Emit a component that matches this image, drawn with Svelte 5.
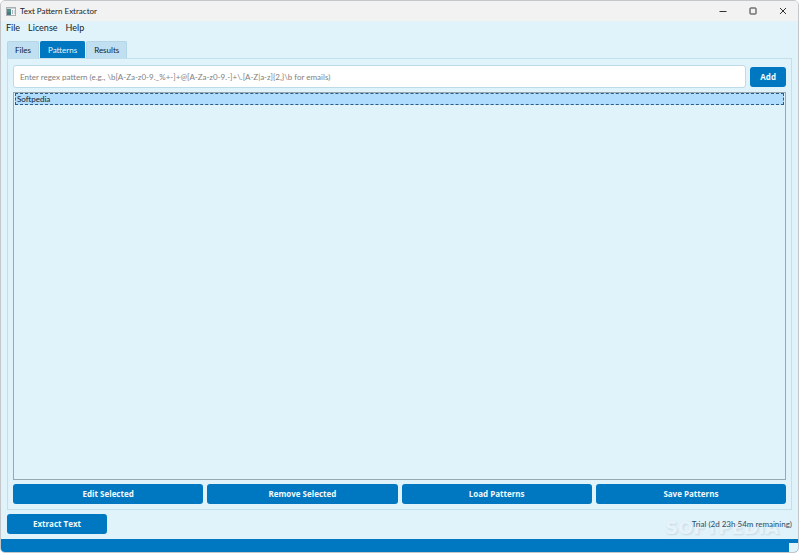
<script lang="ts">
  const menus = ['File', 'License', 'Help'];
  const tabs = ['Files', 'Patterns', 'Results'];
  const actions = ['Edit Selected', 'Remove Selected', 'Load Patterns', 'Save Patterns'];

  let activeTab = $state('Patterns');
  let patterns = $state(['Softpedia']);
  let selected = $state(0);
  let draft = $state('');

  const placeholder = 'Enter regex pattern (e.g., \\b[A-Za-z0-9._%+-]+@[A-Za-z0-9.-]+\\.[A-Z|a-z]{2,}\\b for emails)';

  function addPattern(event: SubmitEvent) {
    event.preventDefault();
    if (!draft.trim()) return;
    patterns.push(draft.trim());
    draft = '';
  }

  function runAction(action: string) {
    if (action === 'Remove Selected') {
      patterns.splice(selected, 1);
      selected = Math.max(0, selected - 1);
    }
  }
</script>

<div class="window">
  <header class="titlebar">
    <svg class="app-icon" viewBox="0 0 10 9" aria-hidden="true">
      <rect x="0.5" y="0.5" width="9" height="8" fill="#f4f6f7" stroke="#a9afb4" />
      <rect x="1" y="1" width="8" height="1" fill="#c9d0d6" />
      <rect x="1" y="2" width="4" height="6" fill="#4f9184" />
      <rect x="1" y="5" width="4" height="3" fill="#487a83" />
      <rect x="6" y="3" width="1" height="4" fill="#a8b2bb" />
      <rect x="8" y="3" width="1" height="4" fill="#d0d6da" />
    </svg>
    <span class="title">Text Pattern Extractor</span>
    <div class="window-controls">
      <button aria-label="Minimize">
        <svg viewBox="0 0 8 8"><path d="M0.5 4.5h7" /></svg>
      </button>
      <button aria-label="Maximize">
        <svg viewBox="0 0 8 8"><rect x="1" y="1" width="6" height="6" rx="0.5" /></svg>
      </button>
      <button aria-label="Close">
        <svg viewBox="0 0 8 8"><path d="M1 1l6 6M7 1l-6 6" /></svg>
      </button>
    </div>
  </header>

  <nav class="menubar">
    {#each menus as menu}
      <button>{menu}</button>
    {/each}
  </nav>

  <main>
    <div class="tabs" role="tablist">
      {#each tabs as tab}
        <button role="tab" class:active={tab === activeTab} aria-selected={tab === activeTab} onclick={() => (activeTab = tab)}>
          {tab}
        </button>
      {/each}
    </div>

    <section class="pane">
      <form class="add-row" onsubmit={addPattern}>
        <input type="text" aria-label="Regex pattern" {placeholder} bind:value={draft} />
        <button class="primary">Add</button>
      </form>

      <div class="pattern-list" role="listbox" aria-label="Patterns">
        {#each patterns as pattern, i}
          <button role="option" class:selected={i === selected} aria-selected={i === selected} onclick={() => (selected = i)}>
            {pattern}
          </button>
        {/each}
      </div>

      <div class="actions">
        {#each actions as action}
          <button class="primary" onclick={() => runAction(action)}>{action}</button>
        {/each}
      </div>
    </section>

    <div class="extract-row">
      <button class="primary extract">Extract Text</button>
      <div class="trial">
        <span class="watermark" aria-hidden="true">SOFTPEDIA</span>
        <span class="trial-text">Trial (2d 23h 54m remaining)</span>
      </div>
    </div>
  </main>

  <footer class="statusbar"><span class="grip"></span></footer>
</div>

<style>
  :global(body) {
    background: #fff;
  }

  .window {
    display: flex;
    flex-direction: column;
    box-sizing: border-box;
    height: 100vh;
    border: 1px solid #c3c7c9;
    border-radius: 5px;
    overflow: hidden;
    background: #e0f2fa;
    color: #10242f;
    font-family: Lato, 'Noto Sans', sans-serif;
    font-size: 8px;
    line-height: 12px;
  }

  button,
  input {
    margin: 0;
    padding: 0;
    border: 0;
    background: none;
    color: inherit;
    font: inherit;
  }

  .titlebar {
    display: flex;
    align-items: center;
    height: 20px;
    padding-left: 5px;
    background: #f2f2f2;
    color: #222;
  }

  .app-icon {
    width: 10px;
    height: 9px;
    margin-right: 4px;
  }

  .window-controls {
    display: flex;
    margin-left: auto;
  }

  .window-controls button {
    display: grid;
    place-items: center;
    width: 30px;
    height: 20px;
  }

  .window-controls svg {
    width: 8px;
    height: 8px;
    fill: none;
    stroke: #333;
  }

  .menubar {
    display: flex;
    gap: 8px;
    padding: 1px 5px 7px;
    font-size: 9px;
  }

  main {
    display: flex;
    flex: 1;
    flex-direction: column;
    padding: 0 6px;
  }

  .tabs {
    display: flex;
    gap: 1px;
  }

  .tabs button {
    height: 17px;
    padding: 0 7px;
    border: 1px solid #b5d6e6;
    border-bottom: 0;
    border-radius: 2px 2px 0 0;
    background: #c0dff0;
  }

  .tabs .active {
    border-color: #0078c1;
    background: #0078c1;
    color: #e8f4fb;
  }

  .pane {
    display: flex;
    flex: 1;
    flex-direction: column;
    gap: 4px;
    padding: 6px 5px 5px;
    border: 1px solid #c2dfec;
  }

  .add-row {
    display: flex;
    align-items: center;
    gap: 4px;
  }

  .add-row input {
    box-sizing: border-box;
    flex: 1;
    min-width: 0;
    height: 23px;
    padding: 0 6px;
    border: 1px solid #bddbe8;
    border-radius: 3px;
    background: #fff;
  }

  .add-row input::placeholder {
    color: #808080;
    opacity: 1;
  }

  .primary {
    height: 20px;
    padding: 0 10px;
    border-radius: 3px;
    background: #0078c1;
    color: #f1f8fc;
    font-family: 'Open Sans', 'Noto Sans', sans-serif;
    font-weight: 700;
  }

  .pattern-list {
    flex: 1;
    padding: 0 1px;
    border: 1px solid #98a8b1;
  }

  .pattern-list button {
    display: block;
    box-sizing: border-box;
    width: 100%;
    height: 12px;
    padding: 0 1px;
    border: 1px solid transparent;
    line-height: 10px;
    text-align: left;
  }

  .pattern-list .selected {
    border: 1px dashed #305a7e;
    background: #b0dcfd;
  }

  .actions {
    display: grid;
    grid-template-columns: repeat(4, 1fr);
    gap: 4px;
  }

  .extract-row {
    display: flex;
    align-items: center;
    justify-content: space-between;
    padding: 4px 0 5px;
  }

  .extract {
    width: 100px;
  }

  .trial {
    position: relative;
    color: #284f68;
  }

  .trial-text {
    position: relative;
  }

  .watermark {
    position: absolute;
    right: 13px;
    bottom: -8px;
    color: #e6f3f9;
    font-family: 'DejaVu Sans', sans-serif;
    font-size: 18px;
    font-weight: 700;
    line-height: 20px;
    text-shadow: 1px 1px 2px #c4d9e3;
  }

  .statusbar {
    display: flex;
    align-items: flex-end;
    justify-content: flex-end;
    height: 13px;
    background: #0078c1;
  }

  .grip {
    width: 9px;
    height: 9px;
    background: #e0f2fa;
  }
</style>
